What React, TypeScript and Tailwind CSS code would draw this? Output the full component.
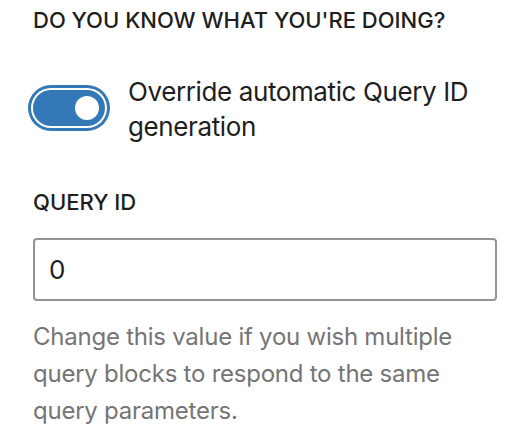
import { useState } from 'react';

export default function App() {
  const [on, setOn] = useState(true);
  const [queryId, setQueryId] = useState('0');

  return (
    <div className="w-[530px] h-[434px] overflow-hidden bg-white px-[33px] font-['Inter','Liberation_Sans',sans-serif] text-[#1e1e1e]">
      {/* section heading */}
      <h2 className="pt-[5px] text-[22px] leading-[30px] font-medium uppercase">
        Do you know what you're doing?
      </h2>

      {/* toggle */}
      <div className="mt-[39px] flex items-start gap-[23px]">
        <button
          onClick={() => setOn(!on)}
          className={`mt-[16px] flex h-[36px] w-[72px] shrink-0 items-center rounded-full px-[6px] ring-[3px] ring-offset-2 ring-[#3479b7] ${on ? 'justify-end bg-[#3479b7]' : 'justify-start bg-white border-2 border-[#1e1e1e]'}`}
        >
          <span className={`block h-[24px] w-[24px] rounded-full ${on ? 'bg-white' : 'bg-[#1e1e1e]'}`} />
        </button>
        <label className="text-[26px] leading-[35px] tracking-[-0.015em]">
          Override automatic Query ID generation
        </label>
      </div>

      {/* query id field */}
      <div className="mt-[43px]">
        <label className="block text-[22px] leading-[30px] font-medium uppercase">Query ID</label>
        <input
          value={queryId}
          onChange={(e) => setQueryId(e.target.value)}
          className="mt-[21px] block h-[63px] w-full rounded-[4px] border-2 border-[#949494] px-[14px] text-[26px] outline-none"
        />
        <p className="mt-[17px] text-[24px] leading-[37px] tracking-[-0.01em] text-[#757575]">
          Change this value if you wish multiple query blocks to respond to the same query parameters.
        </p>
      </div>
    </div>
  );
}
